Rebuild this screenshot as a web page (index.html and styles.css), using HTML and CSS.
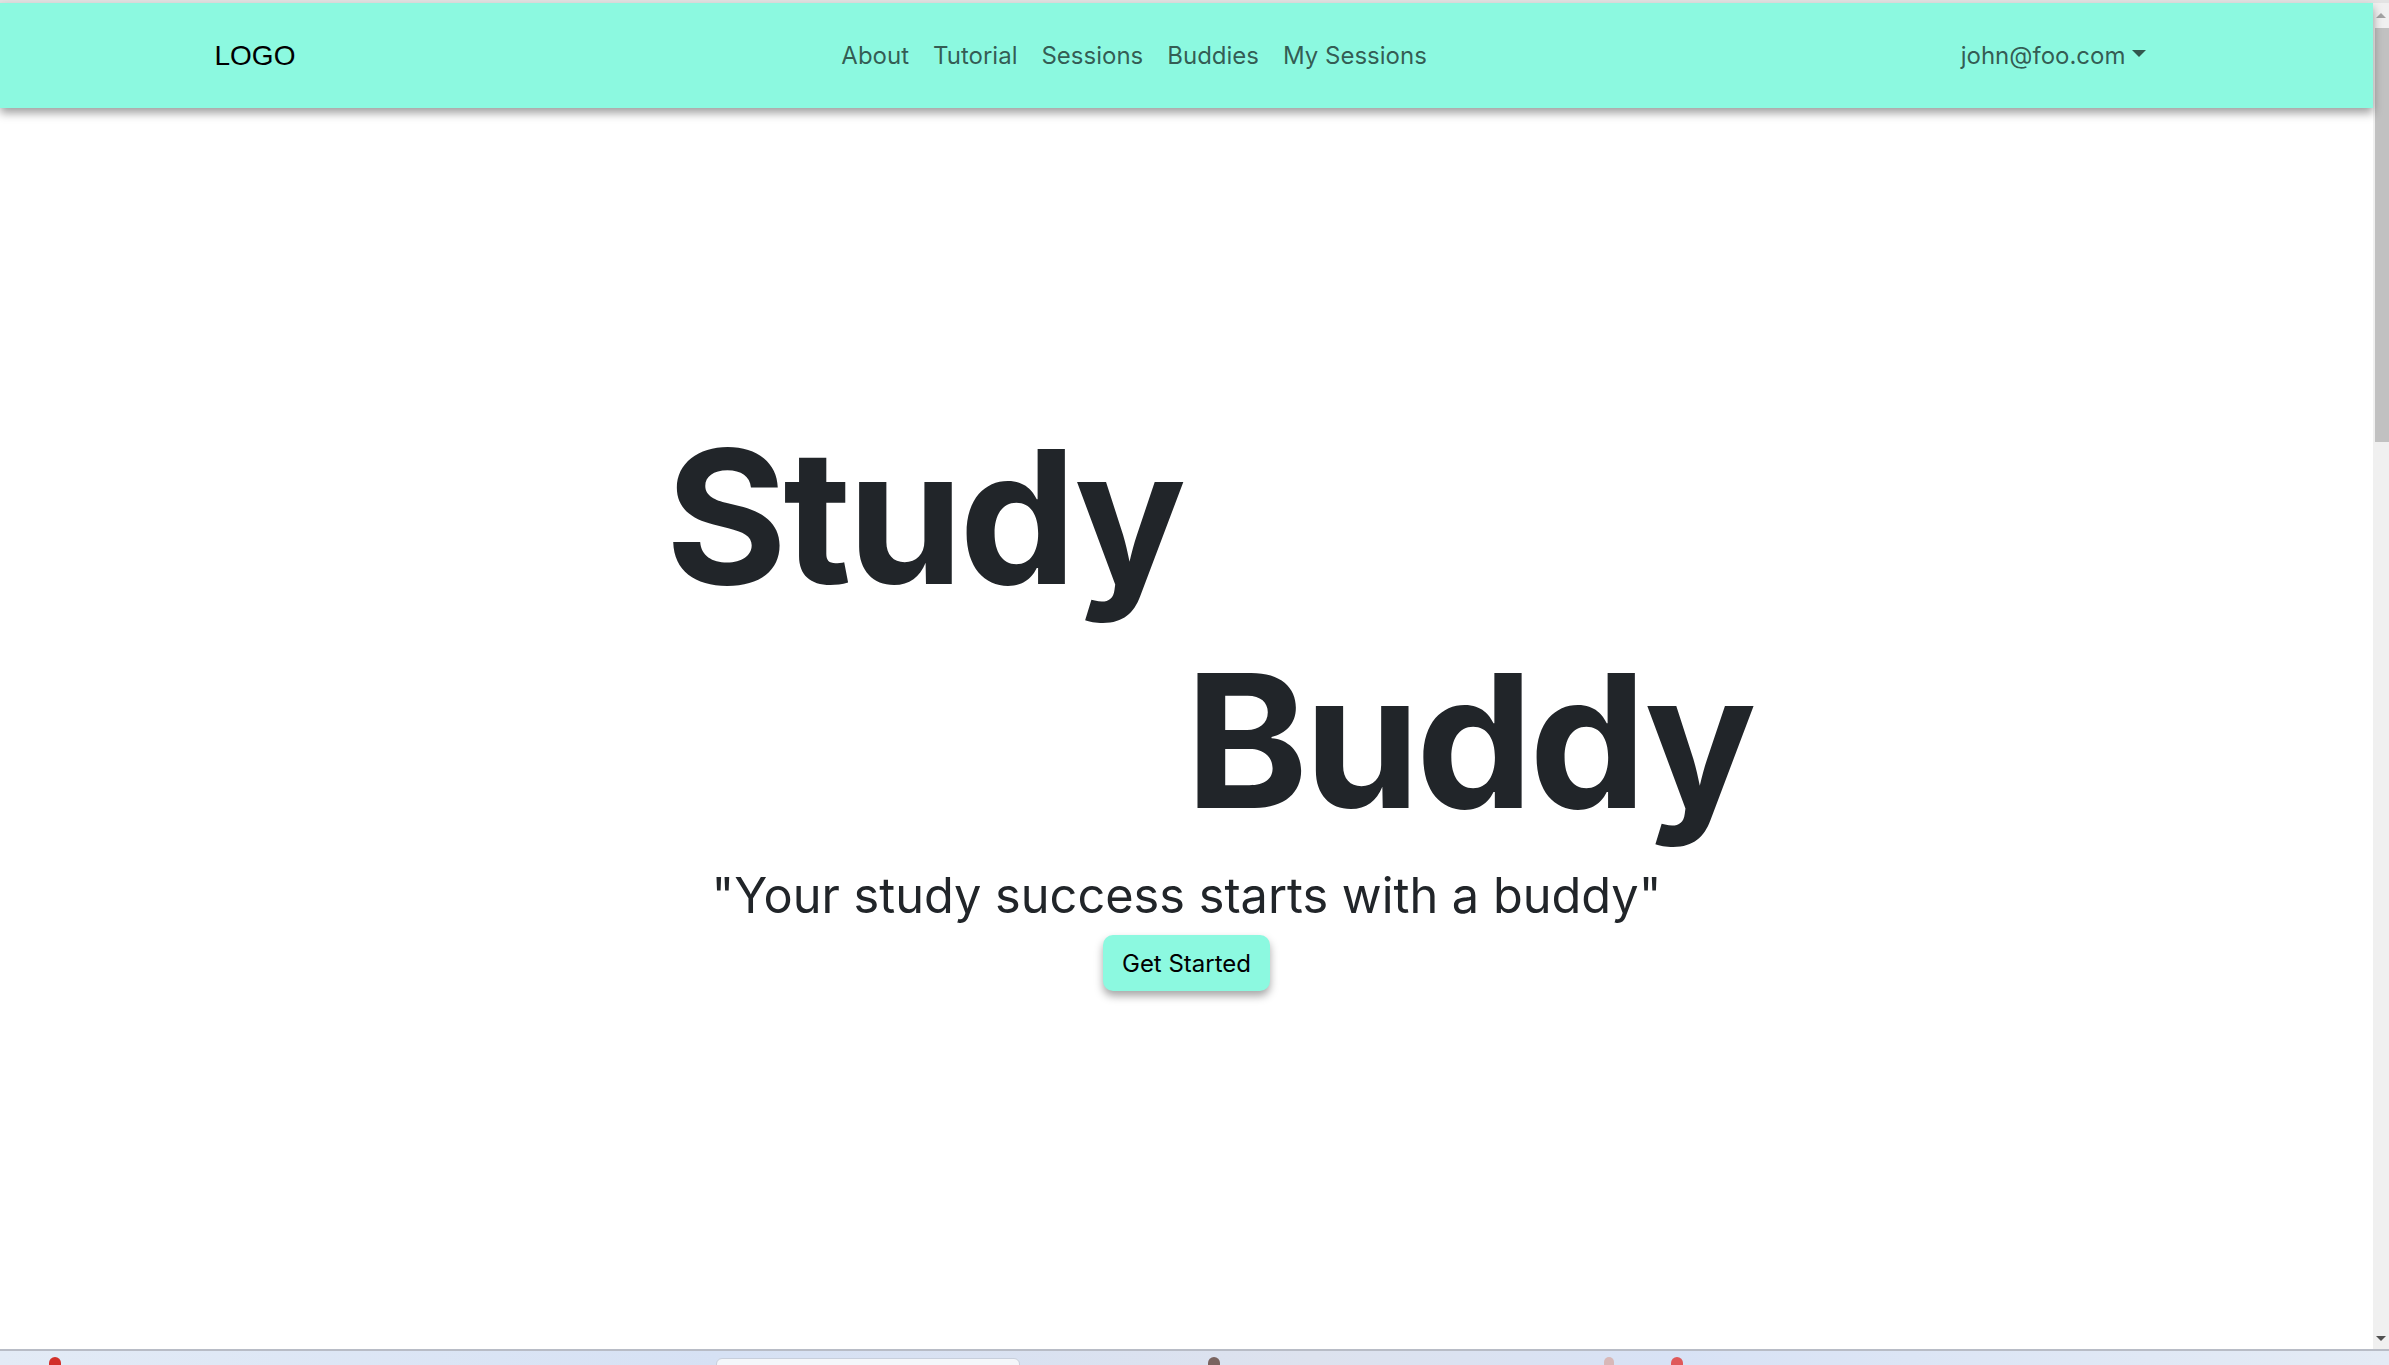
FILE: index.html
```html
<!DOCTYPE html>
<html lang="en">
<head>
<meta charset="utf-8">
<title>Study Buddy</title>
<link rel="stylesheet" href="styles.css">
</head>
<body>
<div class="topstrip"></div>
<div class="window">
  <div class="page">
    <header class="navbar">
      <div class="nav-container">
        <a class="brand" href="#">LOGO</a>
        <ul class="nav-links">
          <li><a href="#">About</a></li>
          <li><a href="#">Tutorial</a></li>
          <li><a href="#">Sessions</a></li>
          <li><a href="#">Buddies</a></li>
          <li><a href="#">My Sessions</a></li>
        </ul>
        <a class="user-toggle" href="#">john@foo.com<span class="caret"></span></a>
      </div>
    </header>
    <main class="hero">
      <div class="hero-title">
        <h1 class="word word-study">Study</h1>
        <h1 class="word word-buddy">Buddy</h1>
      </div>
      <p class="tagline">"Your study success starts with a buddy"</p>
      <a class="cta" href="#">Get Started</a>
    </main>
  </div>
  <div class="scrollbar">
    <div class="arrow-up"></div>
    <div class="thumb"></div>
    <div class="track"></div>
    <div class="arrow-down"></div>
  </div>
</div>
<footer class="taskbar">
  <span class="tb-icon tb-red"></span>
  <span class="tb-pill"></span>
  <span class="tb-icon tb-brown"></span>
  <span class="tb-icon tb-pink"></span>
  <span class="tb-icon tb-red2"></span>
</footer>
</body>
</html>
```
FILE: styles.css
```css
* { box-sizing: border-box; }
html, body { margin: 0; padding: 0; }
body {
  width: 2389px;
  height: 1365px;
  overflow: hidden;
  display: flex;
  flex-direction: column;
  background: #ffffff;
  font-family: Inter, "Noto Sans", sans-serif;
  color: #212529;
}
a { text-decoration: none; }

.topstrip {
  height: 3px;
  background: #e3e3e3;
  flex: none;
}

.window {
  flex: 1;
  display: flex;
  min-height: 0;
}

.page {
  flex: 1;
  display: flex;
  flex-direction: column;
  min-width: 0;
}

.navbar {
  height: 105px;
  flex: none;
  background: #8cf9e0;
  box-shadow: 0 5px 9px rgba(0, 0, 0, 0.38);
  display: flex;
  align-items: center;
  position: relative;
  z-index: 2;
}
.nav-container {
  width: 1980px;
  margin: 0 auto;
  padding: 0 18px;
  display: flex;
  align-items: center;
}
.brand {
  font-family: "Liberation Sans", Arial, sans-serif;
  font-size: 28px;
  color: #000;
  margin-right: 24px;
  line-height: 1;
}
.nav-links {
  list-style: none;
  margin: 0 auto;
  padding: 0;
  display: flex;
}
.nav-links a, .user-toggle {
  display: block;
  padding: 12px 12px;
  font-size: 24px;
  color: rgba(0, 0, 0, 0.65);
  line-height: 1.5;
}
.user-toggle {
  display: flex;
  align-items: center;
}
.caret {
  display: inline-block;
  margin-left: 7px;
  margin-top: -4px;
  border-top: 7px solid rgba(0, 0, 0, 0.65);
  border-left: 7px solid transparent;
  border-right: 7px solid transparent;
}

.hero {
  flex: 1;
  display: flex;
  flex-direction: column;
  align-items: center;
  padding-top: 297px;
}
.hero-title {
  width: 1132px;
  padding-left: 45px;
  display: flex;
  flex-direction: column;
}
.word {
  margin: 0;
  font-size: 186px;
  font-weight: 700;
  line-height: 224px;
  letter-spacing: -4px;
  color: #212529;
}
.word-buddy {
  align-self: flex-end;
}
.tagline {
  margin: 14px 0 0;
  font-size: 48.7px;
  line-height: 1.2;
  color: #212529;
}
.cta {
  margin-top: 10px;
  display: flex;
  align-items: center;
  justify-content: center;
  width: 167px;
  height: 56px;
  border-radius: 10px;
  background: #8cf9e0;
  color: #000;
  font-size: 24px;
  box-shadow: 0 5px 9px rgba(0, 0, 0, 0.35);
}

.scrollbar {
  width: 16px;
  flex: none;
  background: #f0f0f0;
  display: flex;
  flex-direction: column;
  align-items: center;
}
.arrow-up {
  margin-top: 10px;
  width: 0; height: 0;
  border-left: 5px solid transparent;
  border-right: 5px solid transparent;
  border-bottom: 5px solid #a3a3a3;
}
.thumb {
  margin-top: 10px;
  width: 14px;
  margin-left: 2px;
  height: 414px;
  background: #c1c1c1;
}
.track { flex: 1; }
.arrow-down {
  margin-bottom: 8px;
  width: 0; height: 0;
  border-left: 5px solid transparent;
  border-right: 5px solid transparent;
  border-top: 5px solid #505050;
}

.taskbar {
  height: 16px;
  flex: none;
  border-top: 2px solid #b8bcc6;
  background: linear-gradient(90deg, #e3ebf6 0%, #d6e1f4 30%, #dde2ee 55%, #d8e2f5 70%, #e4ebf5 100%);
  position: relative;
  overflow: hidden;
}
.tb-icon {
  position: absolute;
  top: 6px;
  width: 12px;
  height: 14px;
  border-radius: 6px 6px 0 0;
}
.tb-red { left: 49px; background: #d2302a; }
.tb-brown { left: 1208px; background: #7a6460; }
.tb-pink { left: 1604px; background: #d8b8b8; width: 10px; }
.tb-red2 { left: 1671px; background: #e0595a; }
.tb-pill {
  position: absolute;
  top: 7px;
  left: 716px;
  width: 304px;
  height: 14px;
  border-radius: 6px;
  background: #f4f6fa;
  border: 1px solid #c8cfdc;
}
```
